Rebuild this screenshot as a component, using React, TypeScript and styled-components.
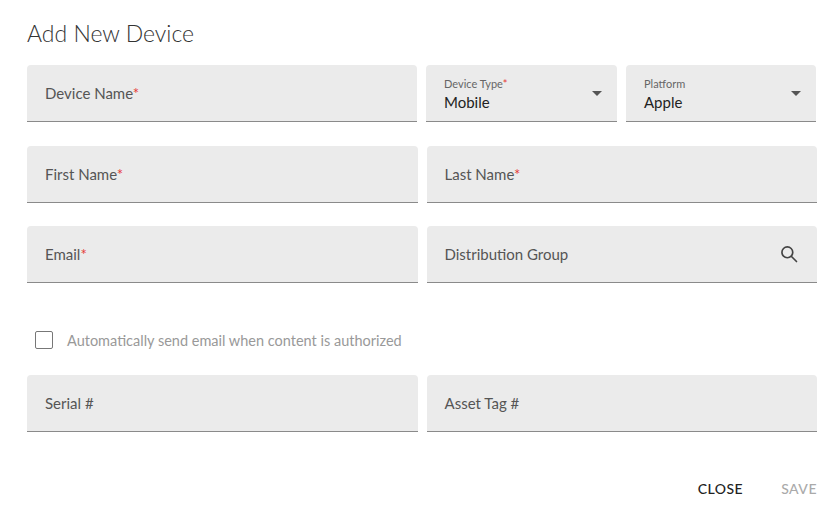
import React from "react";
import styled, { createGlobalStyle } from "styled-components";

const Global = createGlobalStyle`
  body { margin: 0; background: #fff; font-family: Lato, "Noto Sans", sans-serif; }
`;

const Dialog = styled.div`
  width: 839px;
  height: 515px;
  box-sizing: border-box;
  padding: 20px 22px 0 27px;
`;

const Title = styled.h2`
  margin: 0 0 18px;
  font-size: 23px;
  font-weight: 300;
  color: #333;
  line-height: 27px;
`;

const Row = styled.div<{ $gap?: number }>`
  display: flex;
  gap: 9px;
  margin-bottom: ${(p) => p.$gap ?? 23}px;
`;

const Field = styled.div<{ $w?: number }>`
  flex: ${(p) => (p.$w ? `0 0 ${p.$w}px` : 1)};
  height: 57px;
  box-sizing: border-box;
  background: #ebebeb;
  border-radius: 4px 4px 0 0;
  border-bottom: 1px solid #8a8a8a;
  display: flex;
  align-items: center;
  padding: 0 18px;
  gap: 8px;
`;

const Label = styled.span`
  flex: 1;
  font-size: 15px;
  color: #555;
`;

const Req = styled.span`
  color: #e53935;
`;

const Stack = styled.div`
  flex: 1;
  display: flex;
  flex-direction: column;
  padding-top: 2px;
`;

const Small = styled.span`
  font-size: 11px;
  color: #666;
`;

const Value = styled.span`
  font-size: 15px;
  color: #222;
  margin-top: 3px;
`;

const Caret = styled.span`
  width: 0;
  height: 0;
  border-left: 5px solid transparent;
  border-right: 5px solid transparent;
  border-top: 5px solid #555;
  margin-right: -3px;
`;

const CheckRow = styled.label`
  display: flex;
  align-items: center;
  gap: 14px;
  margin: 48px 0 26px 8px;
  font-size: 14.5px;
  color: #999;
`;

const Box = styled.span`
  width: 18px;
  height: 18px;
  box-sizing: border-box;
  border: 1.5px solid #777;
  border-radius: 2px;
`;

const Actions = styled.div`
  display: flex;
  justify-content: flex-end;
  gap: 38px;
  margin-top: 48px;
`;

const Btn = styled.span<{ $off?: boolean }>`
  font-size: 14px;
  font-weight: 500;
  letter-spacing: 0.5px;
  color: ${(p) => (p.$off ? "#aaa" : "#222")};
`;

const Simple = ({ label, req }: { label: string; req?: boolean }) => (
  <Field>
    <Label>
      {label}
      {req && <Req>*</Req>}
    </Label>
  </Field>
);

const Select = ({ label, value, req, w }: { label: string; value: string; req?: boolean; w: number }) => (
  <Field $w={w}>
    <Stack>
      <Small>
        {label}
        {req && <Req>*</Req>}
      </Small>
      <Value>{value}</Value>
    </Stack>
    <Caret />
  </Field>
);

export default function App() {
  return (
    <>
      <Global />
      <Dialog>
        <Title>Add New Device</Title>
        <Row $gap={24}>
          <Field $w={390}>
            <Label>
              Device Name<Req>*</Req>
            </Label>
          </Field>
          <Select label="Device Type" value="Mobile" req w={191} />
          <Select label="Platform" value="Apple" w={190} />
        </Row>
        <Row>
          <Simple label="First Name" req />
          <Simple label="Last Name" req />
        </Row>
        <Row $gap={0}>
          <Simple label="Email" req />
          <Field>
            <Label>Distribution Group</Label>
            <svg width="20" height="20" viewBox="0 0 24 24" fill="none" stroke="#444" strokeWidth="2" strokeLinecap="round">
              <circle cx="10" cy="10" r="6.5" />
              <path d="M15 15l6 6" />
            </svg>
          </Field>
        </Row>
        <CheckRow>
          <Box />
          Automatically send email when content is authorized
        </CheckRow>
        <Row $gap={0}>
          <Simple label="Serial #" />
          <Simple label="Asset Tag #" />
        </Row>
        <Actions>
          <Btn>CLOSE</Btn>
          <Btn $off>SAVE</Btn>
        </Actions>
      </Dialog>
    </>
  );
}
